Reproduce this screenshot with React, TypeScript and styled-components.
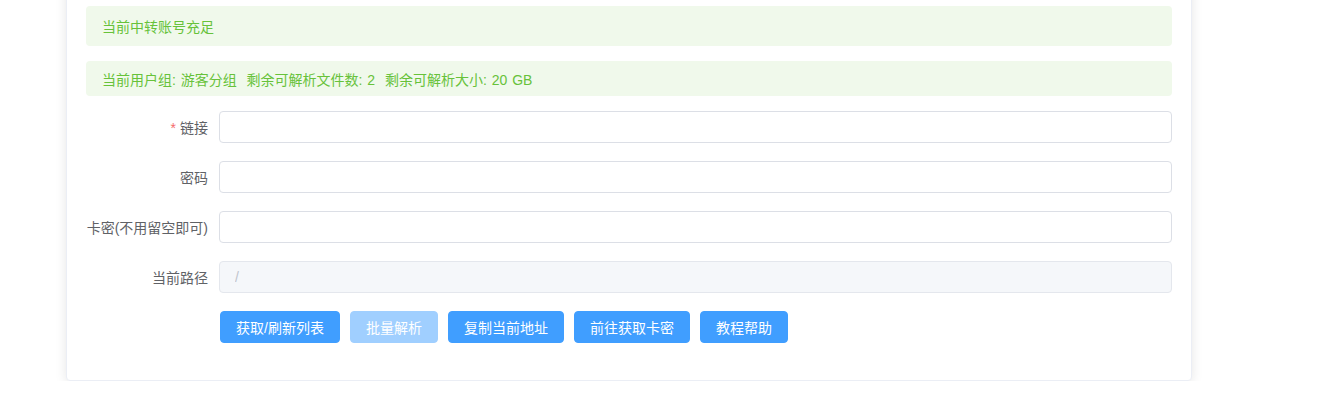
import styled, { createGlobalStyle } from "styled-components";

const GlobalStyle = createGlobalStyle`
  body {
    margin: 0;
    background: #fff;
    font-family: "Liberation Sans", "Noto Sans CJK SC", sans-serif;
    overflow: hidden;
  }
`;

const Page = styled.div`
  padding-left: 66px;
`;

const Card = styled.div`
  box-sizing: border-box;
  width: 1126px;
  margin-top: -20px;
  padding: 25px 19px 37px;
  background: #fff;
  border: 1px solid #ebeef5;
  border-radius: 4px;
  box-shadow: 0 2px 12px 0 rgba(0, 0, 0, 0.1);
`;

const Alert = styled.div<{ $h: number }>`
  display: flex;
  align-items: center;
  height: ${(p) => p.$h}px;
  padding: 0 16px;
  margin-bottom: 15px;
  background: #f0f9eb;
  color: #67c23a;
  font-size: 14px;
  word-spacing: 1px;
  border-radius: 4px;
`;

const FormRow = styled.div`
  display: flex;
  align-items: center;
  height: 32px;
  margin-bottom: 18px;
`;

const Label = styled.label`
  width: 133px;
  padding-right: 11px;
  box-sizing: border-box;
  text-align: right;
  font-size: 14px;
  color: #606266;
  white-space: nowrap;
`;

const Star = styled.span`
  color: #f56c6c;
  margin-right: 4px;
`;

const Input = styled.input`
  flex: 1;
  height: 32px;
  box-sizing: border-box;
  padding: 0 15px;
  border: 1px solid #dcdfe6;
  border-radius: 4px;
  background: #fff;
  font-family: inherit;
  font-size: 14px;
  color: #606266;
  outline: none;

  &:disabled {
    background: #f5f7fa;
    border-color: #e4e7ed;
    color: #c0c4cc;
  }
`;

const ButtonRow = styled.div`
  display: flex;
  gap: 10px;
  padding-left: 134px;
`;

const Button = styled.button`
  height: 32px;
  padding: 0 15px;
  border: 1px solid ${(p) => (p.disabled ? "#a0cfff" : "#409eff")};
  border-radius: 4px;
  background: ${(p) => (p.disabled ? "#a0cfff" : "#409eff")};
  color: #fff;
  font-family: inherit;
  font-size: 14px;
  cursor: ${(p) => (p.disabled ? "not-allowed" : "pointer")};
`;

const fields = [
  { label: "链接", required: true, value: "", disabled: false },
  { label: "密码", required: false, value: "", disabled: false },
  { label: "卡密(不用留空即可)", required: false, value: "", disabled: false },
  { label: "当前路径", required: false, value: "/", disabled: true },
];

const buttons = ["获取/刷新列表", "批量解析", "复制当前地址", "前往获取卡密", "教程帮助"];

export default function App() {
  return (
    <Page>
      <GlobalStyle />
      <Card>
        <Alert $h={40}>当前中转账号充足</Alert>
        <Alert $h={35}>
          当前用户组: 游客分组&nbsp;&nbsp;剩余可解析文件数: 2&nbsp;&nbsp;剩余可解析大小: 20 GB
        </Alert>
        {fields.map((f) => (
          <FormRow key={f.label}>
            <Label>
              {f.required && <Star>*</Star>}
              {f.label}
            </Label>
            <Input defaultValue={f.value} disabled={f.disabled} />
          </FormRow>
        ))}
        <ButtonRow>
          {buttons.map((b) => (
            <Button key={b} disabled={b === "批量解析"}>
              {b}
            </Button>
          ))}
        </ButtonRow>
      </Card>
    </Page>
  );
}
